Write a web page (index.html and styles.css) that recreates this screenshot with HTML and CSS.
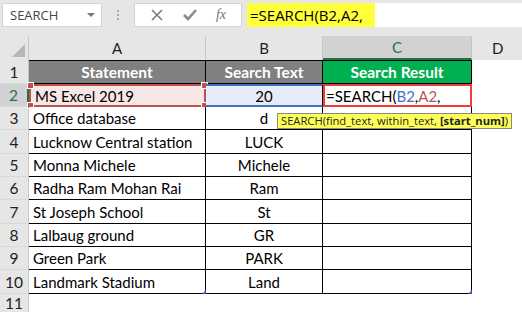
FILE: index.html
```html
<!DOCTYPE html>
<html lang="en">
<head>
    <meta charset="UTF-8">
    <title>SEARCH formula</title>
    <link rel="stylesheet" href="styles.css">
</head>
<body>
    <!-- Formula bar -->
    <div class="topbar">
        <div class="namebox">
            <span>SEARCH</span>
            <span class="caret"></span>
        </div>
        <div class="grip">
            <span></span><span></span><span></span>
        </div>
        <div class="buttons">
            <svg width="14" height="14" viewBox="0 0 14 14"><path d="M2 2 L12 12 M12 2 L2 12" stroke="#7a7a7a" stroke-width="1.6" fill="none"/></svg>
            <svg width="16" height="14" viewBox="0 0 16 14"><path d="M2 7 L6 11 L14 2" stroke="#8a8a8a" stroke-width="2.6" fill="none"/></svg>
            <span class="fx">fx</span>
        </div>
        <div class="formula">
            <span class="hl">=SEARCH(B2,A2,</span>
        </div>
    </div>

    <!-- Sheet -->
    <div class="sheet">
        <div class="corner"><span class="tri"></span></div>
        <div class="colhead">A</div>
        <div class="colhead">B</div>
        <div class="colhead active">C</div>
        <div class="colhead last">D</div>

        <div class="rh">1</div>
        <div class="cell head gray top">Statement</div>
        <div class="cell head gray top">Search Text</div>
        <div class="cell head green top">Search Result</div>
        <div class="blank"></div>

        <div class="rh active">2</div>
        <div class="cell ref-a">MS Excel 2019
            <i class="knob tl"></i><i class="knob tr"></i><i class="knob bl"></i><i class="knob br"></i>
        </div>
        <div class="cell center ref-b">20</div>
        <div class="cell edit">=SEARCH(<span class="blue">B2</span>,<span class="red">A2</span>,
            <div class="tip">SEARCH(find_text, within_text, <b>[start_num]</b>)</div>
        </div>
        <div class="blank"></div>

        <div class="rh">3</div>
        <div class="cell">Office database</div>
        <div class="cell center">d</div>
        <div class="cell"></div>
        <div class="blank"></div>

        <div class="rh">4</div>
        <div class="cell">Lucknow Central station</div>
        <div class="cell center">LUCK</div>
        <div class="cell"></div>
        <div class="blank"></div>

        <div class="rh">5</div>
        <div class="cell">Monna Michele</div>
        <div class="cell center">Michele</div>
        <div class="cell"></div>
        <div class="blank"></div>

        <div class="rh">6</div>
        <div class="cell">Radha Ram Mohan Rai</div>
        <div class="cell center">Ram</div>
        <div class="cell"></div>
        <div class="blank"></div>

        <div class="rh">7</div>
        <div class="cell">St Joseph School</div>
        <div class="cell center">St</div>
        <div class="cell"></div>
        <div class="blank"></div>

        <div class="rh">8</div>
        <div class="cell">Lalbaug ground</div>
        <div class="cell center">GR</div>
        <div class="cell"></div>
        <div class="blank"></div>

        <div class="rh">9</div>
        <div class="cell">Green Park</div>
        <div class="cell center">PARK</div>
        <div class="cell"></div>
        <div class="blank"></div>

        <div class="rh">10</div>
        <div class="cell">Landmark Stadium<i class="mark"></i></div>
        <div class="cell center">Land</div>
        <div class="cell"><i class="mark"></i></div>
        <div class="blank"></div>

        <div class="rh">11</div>
        <div class="blank"></div>
        <div class="blank"></div>
        <div class="blank"></div>
        <div class="blank"></div>
    </div>
</body>
</html>
```

FILE: styles.css
```css
/* Base */
body {
    margin: 0;
    font-family: 'Lato', 'Liberation Sans', sans-serif;
    color: #000;
    background-color: #e6e6e6;
    width: 522px;
    height: 312px;
    overflow: hidden;
}

/* Formula bar */
.topbar {
    display: flex;
    align-items: center;
    height: 30px;
    padding-left: 2px;
    margin-bottom: 6px;
}

.namebox {
    width: 100px;
    height: 24px;
    box-sizing: border-box;
    background-color: #fff;
    border: 1px solid #d4d4d4;
    display: flex;
    align-items: center;
    justify-content: space-between;
    padding: 0 6px 0 7px;
    font-family: 'Open Sans', sans-serif;
    font-size: 13px;
    color: #444;
}

.caret {
    width: 0;
    height: 0;
    border-left: 4px solid transparent;
    border-right: 4px solid transparent;
    border-top: 4px solid #777;
}

.grip {
    width: 32px;
    display: flex;
    flex-direction: column;
    align-items: center;
    gap: 2px;
}

.grip span {
    width: 2px;
    height: 2px;
    background-color: #aaa;
}

.buttons {
    width: 108px;
    height: 24px;
    box-sizing: border-box;
    background-color: #fff;
    border: 1px solid #d4d4d4;
    display: flex;
    align-items: center;
    justify-content: space-around;
    padding: 0 6px;
}

.fx {
    font-family: 'Liberation Serif', serif;
    font-style: italic;
    font-size: 14px;
    color: #777;
}

.formula {
    flex: 1;
    height: 24px;
    margin-left: 5px;
    background-color: #fff;
    display: flex;
    align-items: center;
    font-family: 'Open Sans', sans-serif;
    font-size: 15px;
}

.hl {
    background-color: #ffff3c;
    height: 100%;
    display: flex;
    align-items: center;
    padding: 0 12px 0 3px;
}

/* Sheet grid */
.sheet {
    display: grid;
    grid-template-columns: 29px 177px 117px 149px 1fr;
    grid-template-rows: 24px 24px 23px 23px 24px 23px 23px 24px 23px 23px 24px 1fr;
    height: 276px;
}

.corner {
    border-right: 1px solid #c6c6c6;
    position: relative;
}

.tri {
    position: absolute;
    right: 3px;
    bottom: 3px;
    width: 0;
    height: 0;
    border-left: 13px solid transparent;
    border-bottom: 13px solid #b8b8b8;
}

.colhead {
    display: flex;
    align-items: center;
    justify-content: center;
    border-right: 1px solid #c6c6c6;
    font-size: 15px;
    color: #222;
}

.colhead.active {
    background-color: #d2d2d2;
    border-bottom: 2px solid #217346;
    color: #217346;
    box-sizing: border-box;
}

.colhead.last {
    justify-content: flex-start;
    padding-left: 20px;
    border-right: none;
}

.rh {
    display: flex;
    align-items: center;
    justify-content: center;
    border-right: 1px solid #c6c6c6;
    border-bottom: 1px solid #d8d8d8;
    font-size: 15.5px;
    color: #222;
    box-sizing: border-box;
}

.rh.active {
    background-color: #d2d2d2;
    color: #217346;
    border-right: 2px solid #217346;
}

.blank {
    background-color: #fff;
}

/* Cells */
.cell {
    position: relative;
    display: flex;
    align-items: center;
    padding-left: 4px;
    background-color: #fff;
    border-right: 1px solid #000;
    border-bottom: 1px solid #000;
    box-sizing: border-box;
    font-size: 15px;
    white-space: nowrap;
}

.cell.top {
    border-top: 1px solid #000;
}

.cell.center {
    justify-content: center;
    padding-left: 0;
}

.cell.head {
    justify-content: center;
    padding-left: 0;
    color: #fff;
    font-weight: bold;
    font-size: 15.5px;
}

.gray {
    background-color: #808080;
}

.green {
    background-color: #00b050;
}

.ref-a {
    background-color: #f8e7e7;
    border: 2px solid #c0504d;
}

.ref-b {
    background-color: #e7edf8;
    border-top: 2px solid #4472c4;
    border-bottom: 2px solid #4472c4;
}

.knob {
    position: absolute;
    width: 5px;
    height: 5px;
    background-color: #c0504d;
    border: 1px solid #fff;
}

.knob.tl { left: -4px; top: -4px; }
.knob.tr { right: -4px; top: -4px; }
.knob.bl { left: -4px; bottom: -4px; }
.knob.br { right: -4px; bottom: -4px; }

.edit {
    border: 2px solid #f23c3c;
    padding-left: 1px;
}

.blue {
    color: #4472c4;
}

.red {
    color: #c0504d;
}

.tip {
    position: absolute;
    left: -48px;
    top: 27px;
    background-color: #ffff5a;
    border: 1px solid #888;
    padding: 0 3px;
    font-family: 'Open Sans', sans-serif;
    font-size: 11.2px;
    line-height: 14px;
    color: #222;
    z-index: 2;
}

.mark {
    position: absolute;
    right: -1px;
    bottom: -1px;
    width: 0;
    height: 0;
    border-left: 4px solid transparent;
    border-bottom: 4px solid #3a5fb0;
}
```
